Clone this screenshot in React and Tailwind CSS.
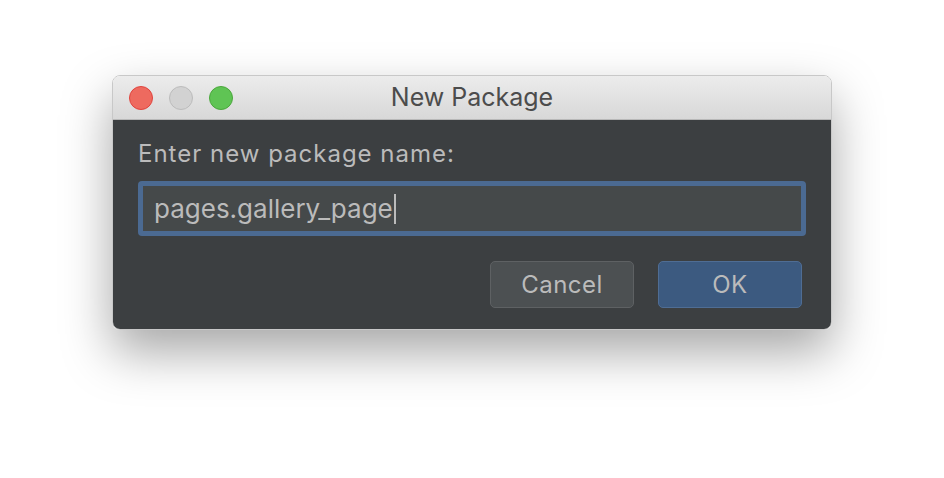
import React from "react";

export default function App() {
  return (
    <div className="flex h-[478px] w-[944px] justify-center bg-white pt-[75px] font-['Inter',sans-serif]">
      <div className="flex h-[255px] w-[720px] flex-col overflow-hidden rounded-[8px] border border-[#c8c8c8] shadow-[0_22px_50px_rgba(0,0,0,0.35)]">
        <div className="relative flex h-[44px] shrink-0 items-center border-b border-[#b8b8b8] bg-gradient-to-b from-[#ececec] to-[#d8d8d8] pl-[16px]">
          <div className="flex gap-[16px]">
            <div className="h-6 w-6 rounded-full border border-[#e0443e] bg-[#ee6a5f]" />
            <div className="h-6 w-6 rounded-full border border-[#bcbcbc] bg-[#d2d2d2]" />
            <div className="h-6 w-6 rounded-full border border-[#4ba73c] bg-[#5fc454]" />
          </div>
          <div className="absolute inset-x-0 top-0 flex h-full items-center justify-center pt-[1px] text-[25px] text-[#4c4c4c]">
            New Package
          </div>
        </div>
        <div className="flex flex-1 flex-col bg-[#3c3f41] px-[25px] pt-[20px]">
          <div className="text-[24px] leading-[28px] tracking-[1px] text-[#bbbbbb]">Enter new package name:</div>
          <div className="mt-[13px] rounded-[4px] bg-[#4b6a92] p-[5px]">
            <div className="flex h-[45px] items-center bg-[#45494a] px-[11px] text-[26px] text-[#bbbbbb]">
              pages.gallery_page
              <span className="ml-[1px] h-[30px] w-[2px] bg-[#bbbbbb]" />
            </div>
          </div>
          <div className="mt-[25px] flex justify-end gap-[24px] pr-[4px]">
            <button className="h-[47px] w-[144px] rounded-[5px] border border-[#5e6163] bg-[#4c5052] text-[24px] tracking-[0.5px] text-[#bbbbbb]">
              Cancel
            </button>
            <button className="h-[47px] w-[144px] rounded-[5px] border border-[#4f6d94] bg-[#3c5a80] text-[24px] tracking-[0.5px] text-[#bbbbbb]">
              OK
            </button>
          </div>
        </div>
      </div>
    </div>
  );
}
